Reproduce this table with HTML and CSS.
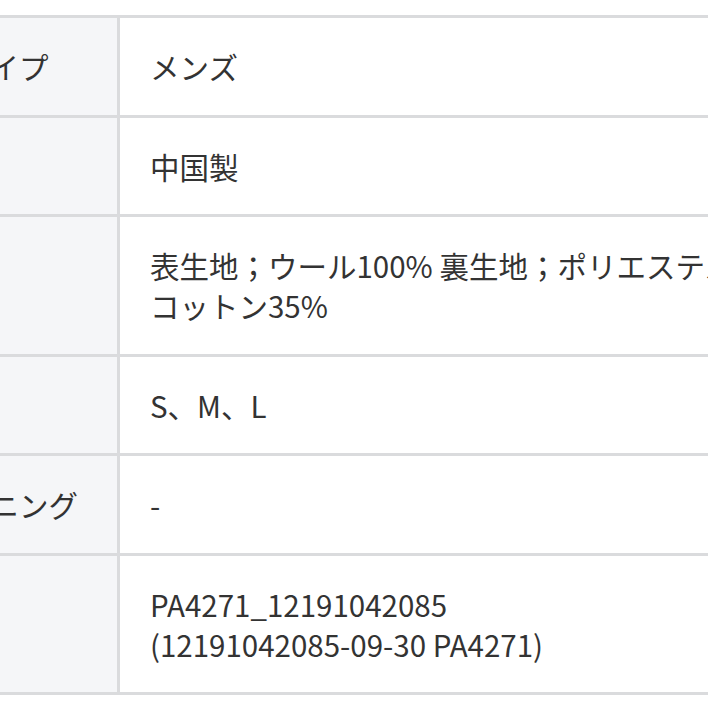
FILE: index.html
```html
<!DOCTYPE html>
<html lang="ja">
<head>
<meta charset="utf-8">
<title>商品詳細</title>
<link rel="stylesheet" href="styles.css">
</head>
<body>
<div class="wrap">
  <table class="spec">
    <tr><th>商品タイプ</th><td>メンズ</td></tr>
    <tr><th>原産国</th><td>中国製</td></tr>
    <tr><th>素材</th><td><span class="seg">表生地；ウール100% 裏生地；ポリエステル65%</span> <span class="seg">コットン35%</span></td></tr>
    <tr><th>サイズ</th><td>S、M、L</td></tr>
    <tr><th>クリーニング</th><td>-</td></tr>
    <tr><th>品番</th><td>PA4271_12191042085<br>(12191042085-09-30 PA4271)</td></tr>
  </table>
</div>
</body>
</html>
```

FILE: styles.css
```css
html, body {
  margin: 0;
  padding: 0;
  overflow: hidden;
  background: #ffffff;
}

.wrap {
  margin-top: 15px;
  margin-left: -121px;
  width: 1200px;
}

.spec {
  table-layout: fixed;
  width: 1100px;
  border-collapse: separate;
  border-spacing: 0;
  border-top: 3px solid #dadbdd;
  font-family: "Noto Sans CJK JP", "Noto Sans", sans-serif;
  font-size: 29.5px;
  line-height: 40px;
  color: #333333;
}

.spec th,
.spec td {
  padding: 28px 30px 28.5px;
  border-bottom: 3px solid #dadbdd;
  text-align: left;
  vertical-align: middle;
  font-weight: 400;
}

.spec th {
  width: 186px;
  padding-left: 22px;
  background: #f5f6f8;
  border-right: 3px solid #dadbdd;
  white-space: nowrap;
  overflow: hidden;
}

.spec td {
  padding-right: 85px;
  background: #ffffff;
}

.seg {
  white-space: nowrap;
}
```
